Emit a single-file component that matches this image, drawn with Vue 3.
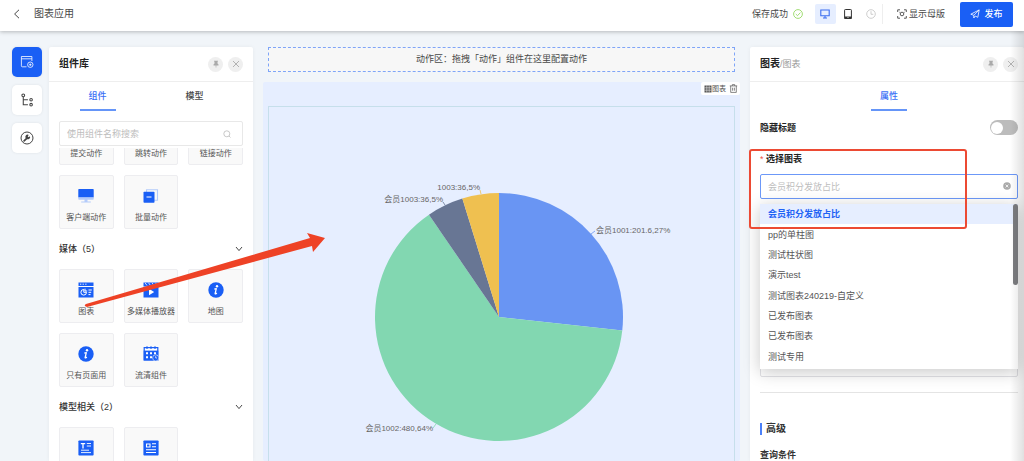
<script setup>
import { ref } from 'vue'

const railItems = [
  { icon: 'i-window', label: '组件库' },
  { icon: 'i-tree', label: '大纲' },
  { icon: 'i-wrench', label: '设置' },
]

const groups = [
  {
    items: [
      { label: '提交动作', icon: 'i-batch' },
      { label: '跳转动作', icon: 'i-batch' },
      { label: '链接动作', icon: 'i-batch' },
      { label: '客户端动作', icon: 'i-client' },
      { label: '批量动作', icon: 'i-batch' },
    ],
  },
  {
    title: '媒体（5）',
    items: [
      { label: '图表', icon: 'i-chart' },
      { label: '多媒体播放器', icon: 'i-video' },
      { label: '地图', icon: 'i-info' },
      { label: '只有页面用', icon: 'i-info' },
      { label: '流清组件', icon: 'i-calendar' },
    ],
  },
  {
    title: '模型相关（2）',
    items: [{ icon: 'i-text' }, { icon: 'i-detail' }],
  },
]

const options = [
  '会员积分发放占比',
  'pp的单柱图',
  '测试柱状图',
  '演示test',
  '测试图表240219-自定义',
  '已发布图表',
  '已发布图表',
  '测试专用',
]
const selected = ref(0)
const hideTitle = ref(false)

const cx = 230
const cy = 210
const radius = 124
const data = [
  { value: 201.6, color: '#6995f3' },
  { value: 480, color: '#82d7b1' },
  { value: 36, color: '#687694' },
  { value: 36, color: '#efc050' },
]
const total = data.reduce((sum, d) => sum + d.value, 0)
const point = (angle) =>
  `${(cx + radius * Math.sin(angle)).toFixed(2)} ${(cy - radius * Math.cos(angle)).toFixed(2)}`
let start = 0
const slices = data.map((d) => {
  const end = start + (d.value / total) * Math.PI * 2
  const large = end - start > Math.PI ? 1 : 0
  const path = `M${cx} ${cy}L${point(start)}A${radius} ${radius} 0 ${large} 1 ${point(end)}Z`
  start = end
  return { path, color: d.color }
})
</script>

<template>
  <div class="app">
    <svg class="sprite" aria-hidden="true">
      <symbol id="i-back" viewBox="0 0 10 10"><path d="M7 .8 2.6 5 7 9.2" fill="none" stroke="currentColor" /></symbol>
      <symbol id="i-window" viewBox="0 0 14 14">
        <g fill="none" stroke="currentColor" stroke-width=".8">
          <path d="M6.500 11.800H2.400A1 1 0 0 1 1.400 10.800V1.500H11.900V6" /><path d="M1.400 3.800H11.900" />
          <circle cx="10.300" cy="9.700" r="2.700" /><path d="M10.300 8.500V10.900M9.100 9.700H11.500" />
        </g>
      </symbol>
      <symbol id="i-tree" viewBox="0 0 12 12">
        <g fill="none" stroke="currentColor" stroke-width=".9">
          <circle cx="2.800" cy="2" r="1.200" /><circle cx="9.500" cy="5.800" r="1.100" /><circle cx="9.500" cy="10" r="1.100" />
          <path d="M2.800 3.400V10H6.800M2.800 5.800H6.800" />
        </g>
      </symbol>
      <symbol id="i-wrench" viewBox="0 0 14 14">
        <circle cx="7" cy="7" r="6" fill="none" stroke="currentColor" />
        <path d="M4.100 9.900 7 7.100" fill="none" stroke="currentColor" stroke-width="1.700" stroke-linecap="round" />
        <path d="M6 7.600A2.300 2.300 0 0 1 8.800 4L7.700 5.300 8.600 6.300 10 5.200A2.300 2.300 0 0 1 6.700 8Z" fill="currentColor" />
      </symbol>
      <symbol id="i-pin" viewBox="0 0 8 8">
        <path d="M2 .8H6V1.600H5.500V3.600L6.500 4.600V5.400H4.300V7.600H3.700V5.400H1.500V4.600L2.500 3.600V1.600H2Z" fill="currentColor" />
      </symbol>
      <symbol id="i-close" viewBox="0 0 8 8"><path d="M1 1 7 7M7 1 1 7" fill="none" stroke="currentColor" stroke-width=".9" /></symbol>
      <symbol id="i-search" viewBox="0 0 8 8">
        <g fill="none" stroke="currentColor" stroke-width=".8"><circle cx="3.800" cy="3.800" r="3" /><path d="M6 6 7.500 7.500" /></g>
      </symbol>
      <symbol id="i-down" viewBox="0 0 8 8"><path d="M1 2 4 5.600 7 2" fill="none" stroke="currentColor" stroke-width=".9" /></symbol>
      <symbol id="i-ok" viewBox="0 0 10 10">
        <g fill="none" stroke="currentColor" stroke-width=".9"><circle cx="5" cy="5" r="4.400" /><path d="M2.800 5 4.500 6.700 7.400 3.600" /></g>
      </symbol>
      <symbol id="i-desktop" viewBox="0 0 10 10">
        <path d="M.8 1H9.200V6.700H.8ZM3 9H7M5 6.700V9" fill="none" stroke="currentColor" stroke-width="1.100" />
      </symbol>
      <symbol id="i-tablet" viewBox="0 0 10 10">
        <path d="M2.300.5H7.700A.7.700 0 0 1 8.400 1.200V9.500H1.600V1.200A.7.700 0 0 1 2.300.5Z" fill="none" stroke="currentColor" />
        <path d="M1.600 7.500H8.400V9.500H1.600Z" fill="currentColor" /><path d="M4.300 8.500H5.700" stroke="#fff" stroke-width=".6" />
      </symbol>
      <symbol id="i-clock" viewBox="0 0 10 10">
        <g fill="none" stroke="currentColor" stroke-width=".9"><circle cx="5" cy="5" r="4.300" /><path d="M5 2.200V5.300H7.300" /></g>
      </symbol>
      <symbol id="i-scan" viewBox="0 0 10 10">
        <g fill="none" stroke="currentColor" stroke-width=".9">
          <path d="M.7 3V.8H3M7 .8H9.300V3M9.300 7V9.200H7M3 9.200H.7V7" /><circle cx="5" cy="5" r="1.800" /><path d="M2.500 3.300H3.200M6.800 3.300H7.500" />
        </g>
      </symbol>
      <symbol id="i-send" viewBox="0 0 10 10">
        <path d="M.8 5.200 9.200.9 7.800 8.300 5.200 7 3.800 9V6.300L9.200.9M.8 5.200 3.800 6.300" fill="none" stroke="currentColor" stroke-width=".8" stroke-linejoin="round" />
      </symbol>
      <symbol id="i-client" viewBox="0 0 16 16">
        <path d="M1 .9H15A.7.700 0 0 1 15.700 1.600V9.500H.3V1.600A.7.700 0 0 1 1 .9Z" fill="#1a5ff5" />
        <path d="M.3 9.500H15.700V11A.7.700 0 0 1 15 11.700H1A.7.700 0 0 1 .3 11ZM6.500 11.700H9.500V13.400H12.800V14.500H3.200V13.400H6.500Z" fill="#b4cbfa" />
      </symbol>
      <symbol id="i-batch" viewBox="0 0 16 16">
        <path d="M3.500 4V1.700H14.500V12.300H11" fill="none" stroke="#b4cbfa" stroke-width="1.100" />
        <rect x=".5" y="3.700" width="11" height="11" rx=".7" fill="#1a5ff5" /><path d="M3.500 9H8.500" stroke="#fff" />
      </symbol>
      <symbol id="i-chart" viewBox="0 0 16 16">
        <path d="M.5.4H15.500V4H.5ZM.5 5H15.500V15.600H.5Z" fill="#1a5ff5" />
        <path d="M2 2.200H3.300M4.600 2.200H5.900M7.200 2.200H8.500" stroke="#fff" stroke-width=".9" />
        <path d="M5.800 7.500A2.800 2.800 0 1 0 8.500 10.300H5.800ZM7 6.700V9H9.200" fill="none" stroke="#fff" />
        <path d="M10.500 8H13.800M10.500 10.300H13.200M10.500 12.600H12.500" stroke="#fff" />
      </symbol>
      <symbol id="i-video" viewBox="0 0 16 16">
        <path d="M.5.4H15.500V4H.5ZM.5 4.500H15.500V15.600H.5Z" fill="#1a5ff5" />
        <path d="M2 .8 4 3.500M5.500.8 7.500 3.500M9 .8 11 3.500M12.500.8 14.500 3.500" stroke="#fff" stroke-width=".8" />
        <path d="M6 6.800 11.200 10 6 13.200Z" fill="#fff" />
      </symbol>
      <symbol id="i-info" viewBox="0 0 16 16">
        <circle cx="8" cy="8" r="7.700" fill="#1a5ff5" /><circle cx="9" cy="4.200" r="1.200" fill="#fff" />
        <path d="M6.300 7.100 8.300 6.700 7.100 11.600Q7.200 12.200 8.900 11.100" fill="none" stroke="#fff" stroke-width="1.300" stroke-linejoin="round" />
      </symbol>
      <symbol id="i-calendar" viewBox="0 0 16 16">
        <path d="M1.200 1.700H14.800V14H1.200Z" fill="#fff" stroke="#1a5ff5" stroke-width="1.200" />
        <path d="M4 .3V3M8 .3V3M12 .3V3" stroke="#1a5ff5" stroke-width="1.100" />
        <path d="M.7 4.600H15.300V14.500H.7Z" fill="#1a5ff5" />
        <path d="M3 6.300H5V8.300H3ZM7 6.300H9V8.300H7ZM11 6.300H13V8.300H11ZM3 10.300H5V12.300H3ZM7 10.300H9V12.300H7Z" fill="#fff" />
        <circle cx="12.700" cy="11.900" r="3.100" fill="#1a5ff5" stroke="#fafafa" stroke-width=".6" /><path d="M12.700 10.200V12H14" fill="none" stroke="#fff" stroke-width=".7" />
      </symbol>
      <symbol id="i-text" viewBox="0 0 16 16">
        <rect x=".4" y=".4" width="15.200" height="15.200" rx=".8" fill="#1a5ff5" />
        <path d="M2.800 3.700H7.200M5 3.700V8.500" stroke="#fff" stroke-width="1.300" />
        <path d="M8.800 3.500H13M8.800 6H13M3 10.200H11M3 12.600H13" stroke="#fff" stroke-width=".9" />
      </symbol>
      <symbol id="i-detail" viewBox="0 0 16 16">
        <rect x=".4" y=".4" width="15.200" height="15.200" rx=".8" fill="#1a5ff5" />
        <path d="M3.500 4H7V7H3.500ZM9 3.800H13M9 6.800H13M3 9.800H13M3 12.500H13" fill="none" stroke="#fff" stroke-width="1.100" />
      </symbol>
      <symbol id="i-grid" viewBox="0 0 8 8">
        <path d="M.5.5H7.500V7.500H.5Z" fill="currentColor" /><path d="M2.800.5V7.500M5.200.5V7.500M.5 2.800H7.500M.5 5.200H7.500" stroke="#fff" stroke-width=".5" />
      </symbol>
      <symbol id="i-trash" viewBox="0 0 8 9">
        <path d="M.3 1.900H7.700M2.800 1.900V.6H5.200V1.900M1.200 1.900V8.400H6.800V1.900M3.100 3.700V6.700M4.900 3.700V6.700" fill="none" stroke="currentColor" stroke-width=".7" />
      </symbol>
      <symbol id="i-clear" viewBox="0 0 8 8">
        <circle cx="4" cy="4" r="3.800" fill="currentColor" /><path d="M2.600 2.600 5.400 5.400M5.400 2.600 2.600 5.400" stroke="#fff" stroke-width=".8" />
      </symbol>
    </svg>

    <header class="topbar">
      <button class="plain back" aria-label="返回"><svg class="s10"><use href="#i-back" /></svg></button>
      <h1>图表应用</h1>
      <span class="saved">保存成功 <svg class="s10"><use href="#i-ok" /></svg></span>
      <div class="devices">
        <button class="device on" aria-label="桌面"><svg class="s10"><use href="#i-desktop" /></svg></button>
        <button class="device" aria-label="平板"><svg class="s10"><use href="#i-tablet" /></svg></button>
        <button class="device off" aria-label="历史"><svg class="s10"><use href="#i-clock" /></svg></button>
      </div>
      <button class="plain master"><svg class="s10"><use href="#i-scan" /></svg>显示母版</button>
      <button class="publish"><svg class="s10"><use href="#i-send" /></svg>发布</button>
    </header>

    <main class="workspace">
      <nav class="rail">
        <button v-for="(item, i) in railItems" :key="item.icon" :class="{ on: i === 0 }" :aria-label="item.label">
          <svg class="s14"><use :href="'#' + item.icon" /></svg>
        </button>
      </nav>

      <aside class="panel library">
        <div class="panel-head">
          <h2>组件库</h2>
          <button class="round" aria-label="固定"><svg class="s8"><use href="#i-pin" /></svg></button>
          <button class="round" aria-label="关闭"><svg class="s8"><use href="#i-close" /></svg></button>
        </div>
        <div class="tabs">
          <button class="tab on">组件</button>
          <button class="tab">模型</button>
        </div>
        <div class="search">
          <input type="text" placeholder="使用组件名称搜索" aria-label="使用组件名称搜索" />
          <svg class="s8"><use href="#i-search" /></svg>
        </div>
        <div class="scroller">
          <div class="scrolled">
            <section v-for="(group, g) in groups" :key="g">
              <h3 v-if="group.title">{{ group.title }}<svg class="s8"><use href="#i-down" /></svg></h3>
              <div class="cards">
                <button v-for="item in group.items" :key="item.label || item.icon" class="card">
                  <svg class="s16"><use :href="'#' + item.icon" /></svg>
                  <span v-if="item.label">{{ item.label }}</span>
                </button>
              </div>
            </section>
          </div>
        </div>
      </aside>

      <section class="canvas">
        <div class="action-zone">动作区：拖拽「动作」组件在这里配置动作</div>
        <div class="chart-card">
          <div class="chart-tools">
            <svg class="s8"><use href="#i-grid" /></svg><span>图表</span>
            <button class="plain" aria-label="删除"><svg class="trash"><use href="#i-trash" /></svg></button>
          </div>
          <div class="chart-frame">
            <svg class="pie" viewBox="0 0 460 400" role="img" aria-label="会员积分发放占比">
              <path v-for="s in slices" :key="s.path" :d="s.path" :fill="s.color" />
              <g fill="none" stroke-width=".8">
                <path d="M322 127 326 124" stroke="#6995f3" /><path d="M167 317 164 321" stroke="#82d7b1" />
                <path d="M176 98 174 95" stroke="#687694" /><path d="M212 87 211 83" stroke="#efc050" />
              </g>
              <text x="327" y="126">会员1001:201.6,27%</text>
              <text x="164" y="324" text-anchor="end">会员1002:480,64%</text>
              <text x="174" y="95" text-anchor="end">会员1003:36,5%</text>
              <text x="211" y="83" text-anchor="end">1003:36,5%</text>
            </svg>
          </div>
        </div>
      </section>

      <aside class="panel props">
        <div class="panel-head">
          <h2>图表<span>/图表</span></h2>
          <button class="round" aria-label="固定"><svg class="s8"><use href="#i-pin" /></svg></button>
          <button class="round" aria-label="关闭"><svg class="s8"><use href="#i-close" /></svg></button>
        </div>
        <div class="tabs single"><button class="tab on">属性</button></div>
        <div class="toggle-row">
          <label for="hide-title">隐藏标题</label>
          <input id="hide-title" v-model="hideTitle" class="switch" type="checkbox" />
        </div>
        <label class="field-label" for="chart-select"><i>*</i> 选择图表</label>
        <div class="combo">
          <input id="chart-select" type="text" role="combobox" aria-expanded="true" aria-controls="chart-options" :placeholder="options[selected]" />
          <button class="plain clear" aria-label="清除"><svg class="s8"><use href="#i-clear" /></svg></button>
          <ul id="chart-options" class="options" role="listbox">
            <li v-for="(option, i) in options" :key="i" role="option" :aria-selected="i === selected" :class="{ on: i === selected }" @click="selected = i">
              {{ option }}
            </li>
          </ul>
        </div>
        <div class="preview"></div>
        <hr />
        <h2 class="advanced">高级</h2>
        <h4>查询条件</h4>
        <div class="edge"></div>
      </aside>
    </main>

    <div class="highlight"></div>
    <svg class="arrow" viewBox="0 0 242 80" aria-hidden="true">
      <path d="M2 74 226 8 223 3 241 8 229 22 228 16 3 77Q-1 76 2 74Z" fill="#ee4226" />
    </svg>
  </div>
</template>

<style>
body {
  overflow: hidden;
}
</style>

<style scoped>
* {
  box-sizing: border-box;
}
.app {
  position: relative;
  display: flex;
  flex-direction: column;
  height: 100vh;
  overflow: hidden;
  background: #f1f5f9;
  color: #484848;
  font: 9px/14px "Liberation Sans", "Noto Sans CJK SC", sans-serif;
}
.sprite {
  position: absolute;
  width: 0;
  height: 0;
}
h1, h2, h3, h4, ul, hr {
  margin: 0;
  padding: 0;
}
button {
  padding: 0;
  border: 0;
  background: none;
  color: inherit;
  font: inherit;
  cursor: pointer;
}
input {
  font: inherit;
  outline: 0;
}
svg {
  display: block;
  flex: none;
}
.s8 { width: 8px; height: 8px; }
.s10 { width: 10px; height: 10px; }
.s14 { width: 14px; height: 14px; }
.s16 { width: 16px; height: 16px; }

.topbar {
  position: relative;
  z-index: 1;
  display: flex;
  align-items: center;
  height: 31px;
  flex: none;
  padding: 0 11px 3px 12px;
  background: #fff;
  box-shadow: 0 1px 4px rgba(0, 0, 0, 0.25);
}
.topbar h1 {
  flex: 1;
  margin-left: 12px;
  font-size: 10px;
  font-weight: 400;
}
.saved {
  display: flex;
  align-items: center;
  gap: 5px;
}
.saved svg {
  color: #97d965;
}
.devices {
  display: flex;
  gap: 2px;
  margin-left: 12px;
  border-right: 1px solid #eee;
}
.device {
  display: grid;
  place-items: center;
  width: 21px;
  height: 20px;
  border-radius: 2px;
  color: #333;
}
.device.on {
  background: #e6eeff;
  color: #3b6df0;
}
.device.off {
  color: #c8c8c8;
}
.master {
  display: flex;
  align-items: center;
  gap: 2px;
  margin-left: 14px;
}
.publish {
  display: flex;
  align-items: center;
  justify-content: center;
  gap: 4px;
  width: 53px;
  height: 25px;
  margin-left: 15px;
  border-radius: 2px;
  background: #1a5ff5;
  color: #fff;
  font-weight: 500;
}

.workspace {
  display: flex;
  flex: 1;
  min-height: 0;
  padding: 16px 0 0 12px;
}
.rail {
  display: flex;
  flex-direction: column;
  gap: 8px;
  width: 30px;
  margin-right: 7px;
}
.rail button {
  display: grid;
  place-items: center;
  height: 30px;
  border-radius: 5px;
  background: #fff;
  color: #444;
  box-shadow: 0 0 3px rgba(0, 0, 0, 0.08);
}
.rail .on {
  background: #1a5ff5;
  color: #fff;
}

.panel {
  flex: none;
  background: #fff;
  border-radius: 2px 2px 0 0;
  box-shadow: 0 0 4px rgba(0, 0, 0, 0.05);
}
.library {
  display: flex;
  flex-direction: column;
  width: 204px;
}
.panel-head {
  display: flex;
  align-items: center;
  gap: 5px;
  height: 35px;
  flex: none;
  padding: 0 10px;
  border-bottom: 1px solid #eee;
}
.panel-head h2 {
  flex: 1;
  color: #222;
  font-size: 10px;
  font-weight: 700;
}
.panel-head h2 span {
  color: #999;
  font-size: 9px;
  font-weight: 400;
}
.round {
  display: grid;
  place-items: center;
  width: 15px;
  height: 15px;
  border-radius: 50%;
  background: #efefef;
  color: #aaa;
}
.tabs {
  display: flex;
  justify-content: space-around;
  height: 29px;
  flex: none;
  padding-right: 10px;
}
.tabs.single {
  padding-right: 0;
}
.tab {
  width: 36px;
  border-bottom: 2px solid transparent;
  font-weight: 500;
}
.tab.on {
  border-color: #6595f8;
  color: #3a70f5;
}
.search {
  display: flex;
  align-items: center;
  height: 25px;
  flex: none;
  margin: 10px 10px 0;
  padding: 0 11px 0 7px;
  border: 1px solid #e8e8e8;
  border-radius: 2px;
  color: #bbb;
}
.search input {
  flex: 1;
  min-width: 0;
  padding: 0;
  border: 0;
}
input::placeholder {
  color: #bdbdbd;
  opacity: 1;
}
.scroller {
  flex: 1;
  min-height: 0;
  margin-top: 2px;
  padding: 0 10px;
  overflow: hidden;
}
.scrolled {
  margin-top: -37px;
}
.cards {
  display: grid;
  grid-template-columns: repeat(3, 1fr);
  gap: 10px;
}
.card {
  display: flex;
  flex-direction: column;
  align-items: center;
  height: 54px;
  padding-top: 12px;
  border: 1px solid #ededf0;
  border-radius: 2px;
  background: #f9f9f9;
  color: #555;
  font-size: 8px;
  white-space: nowrap;
}
.card span {
  margin-top: 7px;
}
.library h3 {
  display: flex;
  align-items: center;
  justify-content: space-between;
  height: 40px;
  color: #333;
  font-size: 9px;
  font-weight: 500;
}

.canvas {
  display: flex;
  flex: 1;
  flex-direction: column;
  min-width: 0;
  margin: 0 10px;
}
.action-zone {
  height: 25px;
  flex: none;
  margin: 0 5px 10px;
  border: 1px dashed #7ea5f8;
  background: #f7f7f7;
  line-height: 23px;
  text-align: center;
}
.chart-card {
  position: relative;
  display: flex;
  flex: 1;
  flex-direction: column;
  min-height: 0;
  padding: 24px 5px 0;
  border-radius: 2px;
  background: #e6eeff;
}
.chart-tools {
  position: absolute;
  top: 0;
  right: 0;
  display: flex;
  align-items: center;
  height: 13px;
  padding: 0 2px 0 3px;
  border-radius: 2px;
  background: #fff;
  color: #555;
  font-size: 7px;
}
.chart-tools button {
  margin-left: 3px;
}
.trash {
  width: 9px;
  height: 9px;
}
.chart-frame {
  display: flex;
  justify-content: center;
  flex: 1;
  min-height: 0;
  padding-right: 5px;
  border: 1px solid #c6dfeb;
  border-bottom: 0;
  overflow: hidden;
}
.pie {
  width: 460px;
  height: 400px;
}
.pie text {
  fill: #666;
  font-size: 8px;
}

.props {
  position: relative;
  width: 274px;
  padding: 0 6px 0 10px;
}
.props .panel-head {
  margin: 0 -6px 0 -10px;
  padding-right: 6px;
}
.toggle-row {
  display: flex;
  align-items: center;
  justify-content: space-between;
  height: 15px;
  margin-top: 9px;
  color: #222;
  font-weight: 700;
}
.switch {
  display: flex;
  align-items: center;
  width: 28px;
  height: 15px;
  margin: 0;
  padding: 0 1px;
  appearance: none;
  border-radius: 8px;
  background: #bcbcbc;
}
.switch::before {
  width: 12px;
  height: 12px;
  border-radius: 50%;
  background: #fff;
  content: "";
}
.switch:checked {
  justify-content: flex-end;
  background: #1a5ff5;
}
.field-label {
  display: block;
  margin: 17px 0 8px;
  color: #222;
  font-weight: 700;
}
.field-label i {
  color: #f05045;
  font-style: normal;
  font-weight: 400;
}
.combo {
  position: relative;
  height: 25px;
}
.combo input {
  display: block;
  width: 100%;
  height: 25px;
  padding: 0 20px 0 7px;
  border: 1px solid #6c98f8;
  border-radius: 2px;
}
.clear {
  position: absolute;
  top: 8px;
  right: 7px;
  color: #aaa;
}
.options {
  position: absolute;
  z-index: 1;
  top: 30px;
  right: 0;
  left: 0;
  display: grid;
  grid-template-rows: repeat(8, 1fr);
  height: 165px;
  padding-bottom: 2px;
  background: #fff;
  box-shadow: 0 3px 16px rgba(0, 0, 0, 0.22);
  list-style: none;
}
.options::after {
  position: absolute;
  top: 0;
  right: 0;
  width: 5px;
  height: 81px;
  border-radius: 3px;
  background: #7c7d80;
  content: "";
}
.options li {
  display: flex;
  align-items: center;
  padding-left: 8px;
  color: #555;
}
.options .on {
  background: #e6eeff;
  color: #1f63f5;
  font-weight: 700;
}
.preview {
  height: 148px;
  margin-top: 30px;
  border: 1px solid #e2e2e6;
  border-radius: 2px;
}
.props hr {
  margin: 15px 0 30px;
  border: 0;
  border-top: 1px solid #e4e4e4;
}
.advanced {
  padding-left: 4px;
  border-left: 2px solid #4b80f8;
  color: #333;
  font-size: 10px;
  font-weight: 700;
  line-height: 12px;
}
.props h4 {
  margin-top: 13px;
  color: #333;
  font-size: 9px;
}
.edge {
  position: absolute;
  z-index: 2;
  top: -16px;
  right: 0;
  bottom: 0;
  width: 14px;
  background: linear-gradient(to right, transparent, rgba(0, 0, 0, 0.12));
  pointer-events: none;
}

.highlight {
  position: absolute;
  z-index: 3;
  top: 149px;
  right: 57px;
  width: 218px;
  height: 80px;
  border: 2px solid #ec4a33;
  border-radius: 3px;
  pointer-events: none;
}
.arrow {
  position: absolute;
  z-index: 3;
  top: 230px;
  left: 84px;
  width: 242px;
  height: 80px;
  overflow: visible;
  pointer-events: none;
}
</style>
